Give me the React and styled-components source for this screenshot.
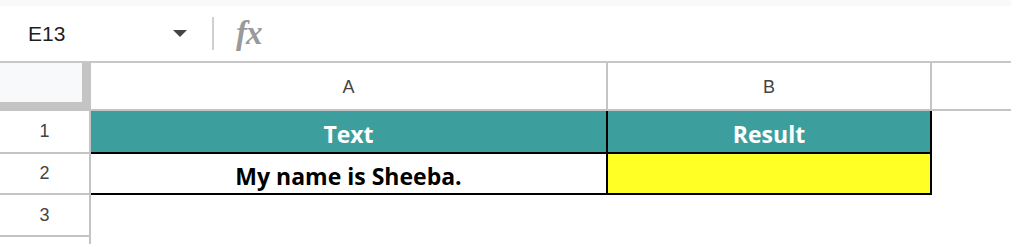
import styled, { createGlobalStyle } from "styled-components";

const GlobalStyle = createGlobalStyle`
  html, body {
    margin: 0;
    padding: 0;
    background: #ffffff;
  }
  * {
    box-sizing: border-box;
  }
`;

const Sheet = styled.div`
  width: 1011px;
  height: 244px;
  overflow: hidden;
  background: #ffffff;
  font-family: "Liberation Sans", Arial, sans-serif;
`;

const TopStrip = styled.div`
  height: 6px;
  background: #f8f9fa;
`;

const FormulaBar = styled.div`
  display: flex;
  align-items: center;
  height: 57px;
  background: #ffffff;
  border-bottom: 2px solid #c7c7c7;
`;

const NameBox = styled.div`
  display: flex;
  align-items: center;
  justify-content: space-between;
  width: 212px;
  padding: 0 25px 0 28px;
  font-size: 21px;
  color: #1f1f1f;
`;

const Caret = styled.span`
  width: 0;
  height: 0;
  border-left: 7px solid transparent;
  border-right: 7px solid transparent;
  border-top: 7px solid #444444;
`;

const Divider = styled.span`
  width: 2px;
  height: 33px;
  background: #d0d0d0;
`;

const FxIcon = styled.span`
  margin-left: 22px;
  font-family: "Liberation Serif", "DejaVu Serif", serif;
  font-style: italic;
  font-weight: bold;
  font-size: 33px;
  color: #9a9a9a;
  letter-spacing: -1px;
`;

const Grid = styled.div`
  display: grid;
  grid-template-columns: 91px 517px 324px 1fr;
  grid-template-rows: 48px 43px 41px 42px 20px;
`;

const Corner = styled.div`
  background: #f8f9fa;
  border-right: 9px solid #c4c4c4;
  border-bottom: 9px solid #c4c4c4;
`;

const ColHeader = styled.div`
  display: flex;
  align-items: center;
  justify-content: center;
  padding-top: 2px;
  font-size: 18px;
  color: #444444;
  border-bottom: 2px solid #c4c4c4;
  border-right: ${(p) => (p.$last ? "none" : "2px solid #c4c4c4")};
`;

const RowHeader = styled.div`
  display: flex;
  align-items: center;
  justify-content: center;
  font-size: 18px;
  color: #444444;
  border-right: 2px solid #c4c4c4;
  border-bottom: 2px solid #c4c4c4;
`;

const Cell = styled.div`
  display: flex;
  align-items: center;
  justify-content: center;
  padding-top: 4px;
  font-family: "Open Sans", Lato, sans-serif;
  font-weight: bold;
  font-size: 23px;
  color: ${(p) => (p.$head ? "#ffffff" : "#000000")};
  background: ${(p) => p.$bg || "#ffffff"};
  border-right: ${(p) => (p.$boxed ? "2px solid #000000" : "none")};
  border-bottom: ${(p) => (p.$boxed ? "2px solid #000000" : "none")};
`;

const TEAL = "#3c9f9d";
const YELLOW = "#ffff26";

export default function App() {
  return (
    <Sheet>
      <GlobalStyle />
      <TopStrip />
      <FormulaBar>
        <NameBox>
          <span>E13</span>
          <Caret />
        </NameBox>
        <Divider />
        <FxIcon>fx</FxIcon>
      </FormulaBar>

      <Grid>
        <Corner />
        <ColHeader>A</ColHeader>
        <ColHeader>B</ColHeader>
        <ColHeader $last />

        <RowHeader>1</RowHeader>
        <Cell $boxed $head $bg={TEAL}>Text</Cell>
        <Cell $boxed $head $bg={TEAL}>Result</Cell>
        <Cell />

        <RowHeader>2</RowHeader>
        <Cell $boxed>My name is Sheeba.</Cell>
        <Cell $boxed $bg={YELLOW} />
        <Cell />

        <RowHeader>3</RowHeader>
        <Cell />
        <Cell />
        <Cell />

        <RowHeader />
        <Cell />
        <Cell />
        <Cell />
      </Grid>
    </Sheet>
  );
}
